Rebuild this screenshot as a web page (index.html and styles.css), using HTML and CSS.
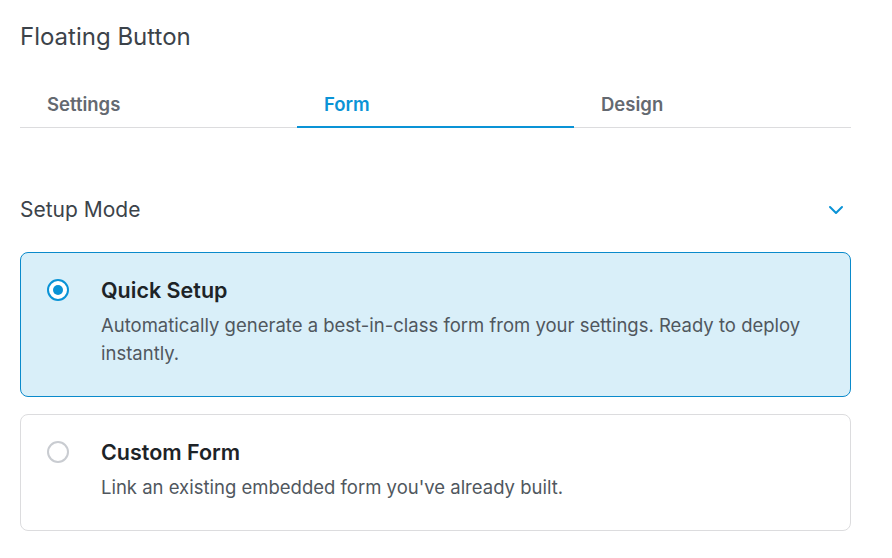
FILE: index.html
```html
<!DOCTYPE html>
<html lang="en">
<head>
    <meta charset="UTF-8">
    <meta name="viewport" content="width=device-width, initial-scale=1.0">
    <title>Floating Button</title>
    <link rel="stylesheet" href="styles.css">
</head>
<body>
    <div class="panel">
        <h1 class="panel-title">Floating Button</h1>
        <div class="tabs">
            <button class="tab">Settings</button>
            <button class="tab active">Form</button>
            <button class="tab">Design</button>
        </div>
        <div class="section-head">
            <h2>Setup Mode</h2>
            <svg class="chevron" width="16" height="10" viewBox="0 0 16 10">
                <path d="M2 2l6 6 6-6" fill="none" stroke="#0a93d6" stroke-width="2" stroke-linecap="round" stroke-linejoin="round"/>
            </svg>
        </div>
        <label class="option selected">
            <span class="radio"></span>
            <span class="option-body">
                <span class="option-title">Quick Setup</span>
                <span class="option-desc">Automatically generate a best-in-class form from your settings. Ready to deploy instantly.</span>
            </span>
        </label>
        <label class="option">
            <span class="radio"></span>
            <span class="option-body">
                <span class="option-title">Custom Form</span>
                <span class="option-desc">Link an existing embedded form you've already built.</span>
            </span>
        </label>
    </div>
</body>
</html>
```
FILE: styles.css
```css
body {
    margin: 0;
    font-family: Inter, "Noto Sans", sans-serif;
    background: #fff;
    color: #3c434a;
}

.panel {
    padding: 21px 41px 0 20px;
}

.panel-title {
    margin: 0;
    font-size: 24px;
    font-weight: 400;
    line-height: 32px;
    color: #3c434a;
}

.tabs {
    display: flex;
    margin-top: 39px;
    border-bottom: 1px solid #dcdcde;
}

.tab {
    flex: 1;
    background: none;
    border: none;
    border-bottom: 2px solid transparent;
    margin-bottom: -1px;
    padding: 0 0 10px 27px;
    text-align: left;
    font-family: inherit;
    font-size: 18.5px;
    font-weight: 600;
    line-height: 24px;
    color: #646970;
    cursor: pointer;
}

.tab.active {
    color: #0a93d6;
    border-bottom-color: #0a93d6;
}

.section-head {
    display: flex;
    justify-content: space-between;
    align-items: center;
    margin-top: 69px;
    padding-right: 7px;
}

.section-head h2 {
    margin: 0;
    font-size: 21px;
    font-weight: 400;
    line-height: 26px;
    color: #3c434a;
}

.option {
    display: flex;
    gap: 32px;
    margin-top: 29px;
    padding: 24px 26px 29px 26px;
    border: 1px solid #dcdcde;
    border-radius: 8px;
    background: #fff;
    cursor: pointer;
}

.option + .option {
    margin-top: 17px;
}

.option.selected {
    background: #d9eff9;
    border-color: #0a8acb;
}

.radio {
    flex: none;
    box-sizing: border-box;
    width: 22px;
    height: 22px;
    margin-top: 2px;
    border: 2px solid #c9ccd1;
    border-radius: 50%;
    background: #fff;
    display: flex;
    align-items: center;
    justify-content: center;
}

.selected .radio {
    border-color: #0a93d6;
}

.selected .radio::after {
    content: "";
    width: 10px;
    height: 10px;
    border-radius: 50%;
    background: #0a93d6;
}

.option-body {
    display: flex;
    flex-direction: column;
    gap: 8px;
}

.option-title {
    font-size: 21.5px;
    font-weight: 600;
    line-height: 26px;
    color: #1d2327;
}

.option-desc {
    font-size: 18.5px;
    line-height: 28px;
    color: #50575e;
}
```
